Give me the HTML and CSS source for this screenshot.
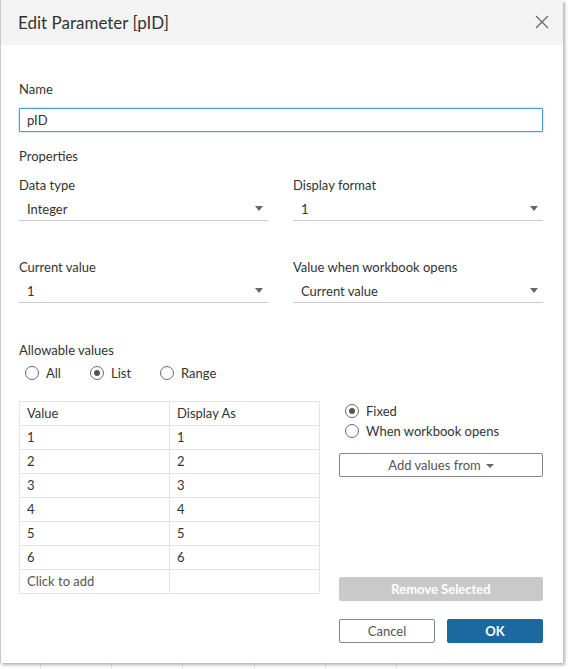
FILE: index.html
```html
<!DOCTYPE html>
<html>
<head>
<meta charset="utf-8">
<link rel="stylesheet" href="styles.css">
</head>
<body>
<div class="dialog">
  <div class="header">
    <div class="title">Edit Parameter [pID]</div>
    <svg class="close" width="14" height="14" viewBox="0 0 14 14"><path d="M1 1 L13 13 M13 1 L1 13" stroke="#666" stroke-width="1.3" fill="none"/></svg>
  </div>
  <div class="content">
    <div class="label name-label">Name</div>
    <div class="input">pID</div>
    <div class="label props">Properties</div>
    <div class="grid">
      <div class="field">
        <div class="label">Data type</div>
        <div class="select"><span>Integer</span><i class="caret"></i></div>
      </div>
      <div class="field">
        <div class="label">Display format</div>
        <div class="select"><span>1</span><i class="caret"></i></div>
      </div>
      <div class="field">
        <div class="label">Current value</div>
        <div class="select"><span>1</span><i class="caret"></i></div>
      </div>
      <div class="field">
        <div class="label">Value when workbook opens</div>
        <div class="select"><span>Current value</span><i class="caret"></i></div>
      </div>
    </div>
    <div class="label allow">Allowable values</div>
    <div class="radios">
      <label class="radio r-all"><i class="dot"></i>All</label>
      <label class="radio r-list"><i class="dot on"></i>List</label>
      <label class="radio r-range"><i class="dot"></i>Range</label>
    </div>
    <div class="main">
      <div class="table">
        <div class="row head"><div class="cell">Value</div><div class="cell">Display As</div></div>
        <div class="row"><div class="cell">1</div><div class="cell">1</div></div>
        <div class="row"><div class="cell">2</div><div class="cell">2</div></div>
        <div class="row"><div class="cell">3</div><div class="cell">3</div></div>
        <div class="row"><div class="cell">4</div><div class="cell">4</div></div>
        <div class="row"><div class="cell">5</div><div class="cell">5</div></div>
        <div class="row"><div class="cell">6</div><div class="cell">6</div></div>
        <div class="row"><div class="cell add">Click to add</div><div class="cell"></div></div>
      </div>
      <div class="side">
        <label class="radio"><i class="dot on"></i>Fixed</label>
        <label class="radio"><i class="dot"></i>When workbook opens</label>
        <div class="btn outline addvals">Add values from <i class="caret small"></i></div>
        <div class="btn disabled remove">Remove Selected</div>
      </div>
    </div>
    <div class="footer">
      <div class="btn outline cancel">Cancel</div>
      <div class="btn primary ok">OK</div>
    </div>
  </div>
</div>
<div class="under">
  <div class="col"></div><div class="col"></div><div class="col"></div><div class="col"></div><div class="col"></div><div class="col"></div>
</div>
</body>
</html>
```

FILE: styles.css
```css
* { box-sizing: border-box; }
html, body { margin: 0; padding: 0; background: #fff; }
body {
  font-family: Lato, "Noto Sans", sans-serif;
  font-size: 13px;
  color: #333;
  width: 569px;
  height: 669px;
  overflow: hidden;
  position: relative;
}
.dialog {
  width: 563px;
  height: 663px;
  background: #fff;
  border-left: 1px solid #c8c8c8;
  box-shadow: 2px 2px 3px rgba(0,0,0,0.3);
  position: relative;
  z-index: 1;
}
.header {
  height: 45px;
  background: #f3f3f3;
  display: flex;
  align-items: center;
  justify-content: space-between;
  padding: 0 14px 0 17px;
}
.title {
  font-size: 17px;
  font-weight: 400;
  color: #333;
}
.close { display: block; margin-top: -1px; }
.content {
  padding: 0 20px 0 18px;
}
.label {
  line-height: 16px;
  height: 16px;
  color: #333;
}
.name-label { padding-top: 36px; height: 52px; }
.input {
  margin-top: 11px;
  height: 24px;
  border: 1px solid #4a98d3;
  box-shadow: 0 0 2px rgba(74,152,211,0.7);
  border-radius: 1px;
  padding-left: 7px;
  line-height: 22px;
}
.props { margin-top: 16px; }
.grid {
  display: grid;
  grid-template-columns: 249px 250px;
  column-gap: 25px;
  row-gap: 38px;
  margin-top: 13px;
}
.field .label { margin-bottom: 4px; }
.select {
  height: 24px;
  border-bottom: 1px solid #cbcbcb;
  display: flex;
  align-items: center;
  justify-content: space-between;
  padding: 0 5px 0 8px;
}
.caret {
  display: inline-block;
  width: 0; height: 0;
  border-left: 4px solid transparent;
  border-right: 4px solid transparent;
  border-top: 5px solid #666;
}
.caret.small {
  border-left-width: 4px;
  border-right-width: 4px;
  border-top-width: 4px;
  margin-left: 5px;
  margin-top: 1px;
}
.allow { margin-top: 39px; }
.radios {
  display: flex;
  margin-top: 7px;
  height: 16px;
  padding-left: 6px;
}
.radio {
  display: flex;
  align-items: center;
  height: 16px;
  line-height: 16px;
}
.dot {
  width: 14px; height: 14px;
  border: 1px solid #6a6a6a;
  border-radius: 50%;
  margin-right: 7px;
  display: inline-flex;
  align-items: center;
  justify-content: center;
  background: #fff;
}
.dot.on::after {
  content: "";
  width: 6px; height: 6px;
  border-radius: 50%;
  background: #555;
}
.r-all { width: 65px; }
.r-list { width: 70px; }
.main {
  display: flex;
  align-items: flex-start;
  margin-top: 20px;
}
.table {
  width: 301px;
  border: 1px solid #e4e4e4;
  border-bottom: none;
}
.row {
  display: flex;
  height: 24px;
  border-bottom: 1px solid #e4e4e4;
}
.cell {
  line-height: 23px;
  padding-left: 7px;
}
.cell:first-child {
  width: 150px;
  border-right: 1px solid #e4e4e4;
}
.add { color: #555; }
.side {
  margin-left: 19px;
  width: 204px;
  display: flex;
  flex-direction: column;
}
.side .radio { padding-left: 6px; height: 20px; }
.btn {
  height: 24px;
  display: flex;
  align-items: center;
  justify-content: center;
  border-radius: 2px;
  font-size: 13px;
}
.outline {
  border: 1px solid #858585;
  color: #555;
  background: #fff;
}
.addvals { margin-top: 12px; }
.disabled {
  background: #c9c9c9;
  color: #fff;
  font-weight: 700;
}
.remove { margin-top: 100px; }
.footer {
  display: flex;
  justify-content: flex-end;
  gap: 12px;
  margin-top: 18px;
}
.cancel { width: 96px; }
.primary {
  width: 96px;
  background: #1a69a0;
  color: #fff;
  font-weight: 700;
}
.under {
  position: absolute;
  left: 0; top: 655px;
  height: 14px;
  display: flex;
  padding-left: 40px;
}
.under .col {
  width: 71.2px;
  border-left: 1px solid #e8e8e8;
  height: 14px;
}
```
